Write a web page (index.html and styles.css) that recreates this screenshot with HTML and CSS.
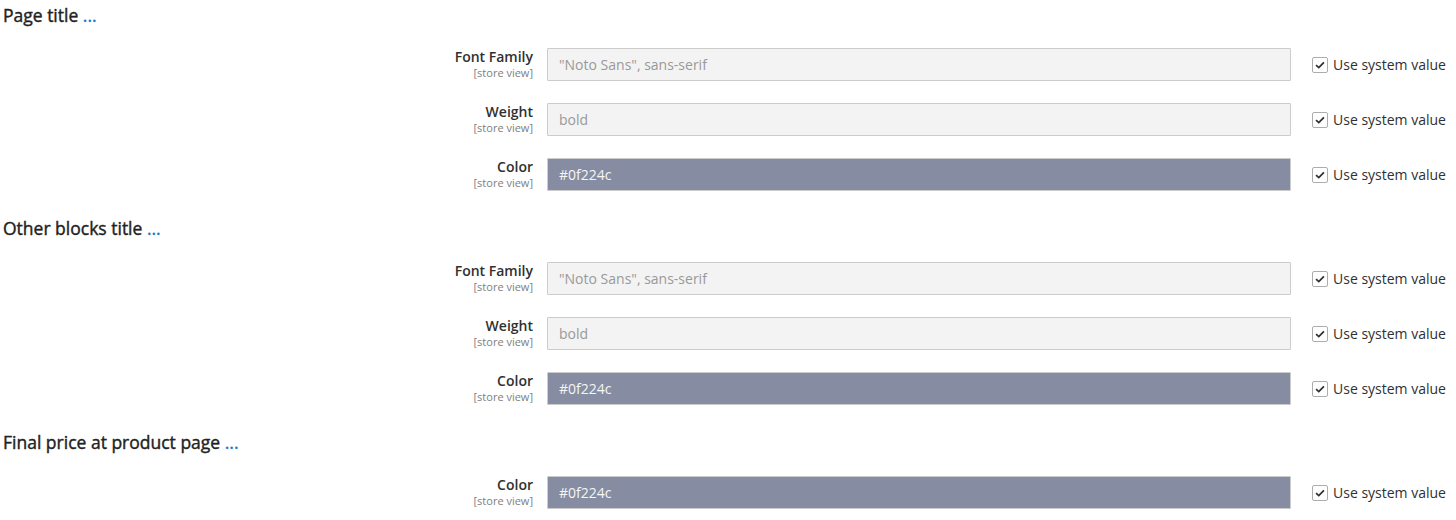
FILE: index.html
```html
<!DOCTYPE html>
<html>
<head>
<meta charset="utf-8">
<link rel="stylesheet" href="styles.css">
</head>
<body>
<div class="page">
  <section class="section">
    <h3 class="section-title">Page title <span class="dots">...</span></h3>
    <div class="rows">
      <div class="row">
        <div class="label"><span class="label-name">Font Family</span><span class="scope">[store view]</span></div>
        <div class="control"><input class="input" type="text" value="&quot;Noto Sans&quot;, sans-serif" disabled></div>
        <label class="use-default"><span class="checkbox"><svg viewBox="0 0 16 16" width="16" height="16"><path d="M3.5 8.2 L6.6 11 L12.5 5" fill="none" stroke="#303030" stroke-width="2"/></svg></span>Use system value</label>
      </div>
      <div class="row">
        <div class="label"><span class="label-name">Weight</span><span class="scope">[store view]</span></div>
        <div class="control"><input class="input" type="text" value="bold" disabled></div>
        <label class="use-default"><span class="checkbox"><svg viewBox="0 0 16 16" width="16" height="16"><path d="M3.5 8.2 L6.6 11 L12.5 5" fill="none" stroke="#303030" stroke-width="2"/></svg></span>Use system value</label>
      </div>
      <div class="row">
        <div class="label"><span class="label-name">Color</span><span class="scope">[store view]</span></div>
        <div class="control"><input class="input input-color" type="text" value="#0f224c" disabled></div>
        <label class="use-default"><span class="checkbox"><svg viewBox="0 0 16 16" width="16" height="16"><path d="M3.5 8.2 L6.6 11 L12.5 5" fill="none" stroke="#303030" stroke-width="2"/></svg></span>Use system value</label>
      </div>
    </div>
  </section>
  <section class="section">
    <h3 class="section-title">Other blocks title <span class="dots">...</span></h3>
    <div class="rows">
      <div class="row">
        <div class="label"><span class="label-name">Font Family</span><span class="scope">[store view]</span></div>
        <div class="control"><input class="input" type="text" value="&quot;Noto Sans&quot;, sans-serif" disabled></div>
        <label class="use-default"><span class="checkbox"><svg viewBox="0 0 16 16" width="16" height="16"><path d="M3.5 8.2 L6.6 11 L12.5 5" fill="none" stroke="#303030" stroke-width="2"/></svg></span>Use system value</label>
      </div>
      <div class="row">
        <div class="label"><span class="label-name">Weight</span><span class="scope">[store view]</span></div>
        <div class="control"><input class="input" type="text" value="bold" disabled></div>
        <label class="use-default"><span class="checkbox"><svg viewBox="0 0 16 16" width="16" height="16"><path d="M3.5 8.2 L6.6 11 L12.5 5" fill="none" stroke="#303030" stroke-width="2"/></svg></span>Use system value</label>
      </div>
      <div class="row">
        <div class="label"><span class="label-name">Color</span><span class="scope">[store view]</span></div>
        <div class="control"><input class="input input-color" type="text" value="#0f224c" disabled></div>
        <label class="use-default"><span class="checkbox"><svg viewBox="0 0 16 16" width="16" height="16"><path d="M3.5 8.2 L6.6 11 L12.5 5" fill="none" stroke="#303030" stroke-width="2"/></svg></span>Use system value</label>
      </div>
    </div>
  </section>
  <section class="section">
    <h3 class="section-title">Final price at product page <span class="dots">...</span></h3>
    <div class="rows">
      <div class="row">
        <div class="label"><span class="label-name">Color</span><span class="scope">[store view]</span></div>
        <div class="control"><input class="input input-color" type="text" value="#0f224c" disabled></div>
        <label class="use-default"><span class="checkbox"><svg viewBox="0 0 16 16" width="16" height="16"><path d="M3.5 8.2 L6.6 11 L12.5 5" fill="none" stroke="#303030" stroke-width="2"/></svg></span>Use system value</label>
      </div>
    </div>
  </section>
</div>
</body>
</html>
```

FILE: styles.css
```css
* { box-sizing: border-box; }
html, body { margin: 0; padding: 0; background: #fff; }
body {
  font-family: "Open Sans", "Noto Sans", "Liberation Sans", sans-serif;
  color: #303030;
  font-size: 14px;
}
.page {
  display: flex;
  flex-direction: column;
  gap: 22px;
}
.section-title {
  margin: 0 0 18px 0;
  padding-left: 3px;
  font-size: 17.5px;
  font-weight: 400;
  line-height: 30px;
  color: #222222;
  -webkit-text-stroke: 0.4px #222222;
}
.dots { color: #1979c3; -webkit-text-stroke: 0.4px #1979c3; }
.rows {
  display: flex;
  flex-direction: column;
  gap: 22px;
}
.section + .section .section-title { margin-bottom: 19px; }
.row {
  display: grid;
  grid-template-columns: 533px 744px auto;
  column-gap: 14px;
  align-items: start;
}
.label {
  display: flex;
  flex-direction: column;
  align-items: flex-end;
}
.label-name {
  font-size: 14px;
  font-weight: 600;
  line-height: 18px;
  color: #303030;
}
.scope {
  font-size: 11px;
  line-height: 14px;
  color: #808080;
}
.input {
  display: block;
  width: 100%;
  height: 33px;
  margin: 0;
  padding: 0 11px;
  border: 1px solid #cccccc;
  border-radius: 1px;
  background: #f3f3f3;
  color: #999999;
  font-family: inherit;
  font-size: 14px;
  opacity: 1;
  -webkit-text-fill-color: #999999;
}
.input-color {
  background: #868da2;
  border-color: #cccccc;
  color: #f5f5f5;
  -webkit-text-fill-color: #f5f5f5;
}
.use-default {
  display: flex;
  align-items: center;
  height: 33px;
  margin-left: 7px;
  font-size: 14px;
  color: #303030;
  white-space: nowrap;
}
.checkbox {
  display: flex;
  align-items: center;
  justify-content: center;
  width: 16px;
  height: 16px;
  margin-right: 5px;
  border: 1px solid #adadad;
  border-radius: 2px;
  background: #fff;
}
.checkbox svg { width: 14px; height: 14px; }
```
